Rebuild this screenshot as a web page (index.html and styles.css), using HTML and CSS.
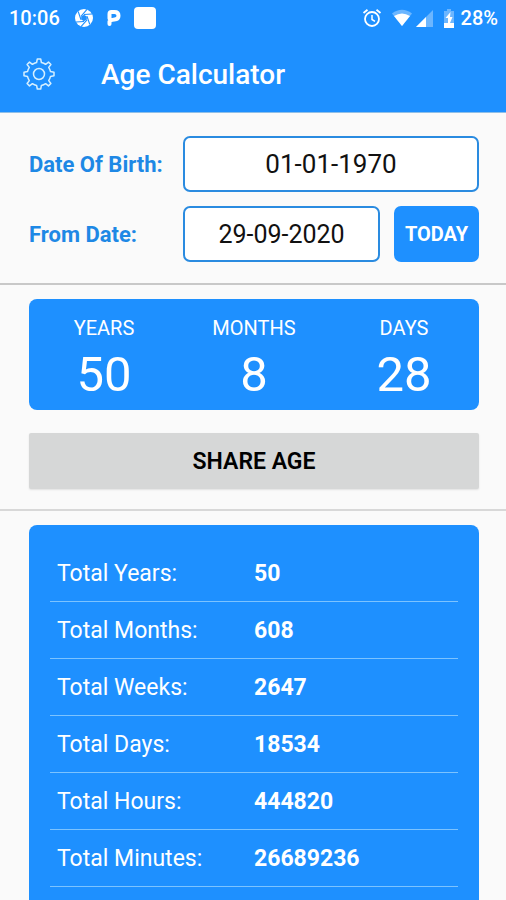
FILE: index.html
```html
<!DOCTYPE html>
<html lang="en">
<head>
  <meta charset="UTF-8" />
  <meta name="viewport" content="width=device-width, initial-scale=1.0" />
  <title>Age Calculator</title>
  <link rel="stylesheet" href="styles.css">
</head>
<body>
  <header class="header">
    <div class="status">
      <span class="time">10:06</span>
      <div class="status-left">
        <svg width="20" height="20" viewBox="0 0 20 20">
          <circle cx="10" cy="10" r="9" fill="#fff"/>
          <path d="M10 6.5 L18 6 M13 8.3 L15.8 16.5 M13 11.8 L7 18.6 M10 13.5 L2 14 M7 11.8 L4.2 3.5 M7 8.3 L13 1.4" stroke="#1e90ff" stroke-width="1.1"/>
          <path d="M10 6.8 L12.8 8.4 V11.6 L10 13.2 L7.2 11.6 V8.4 Z" fill="#1e90ff"/>
        </svg>
        <svg width="16" height="18" viewBox="0 0 16 18">
          <path d="M3.5 9.5 V5 Q3.5 3 5.5 3 H8.500 Q12.500 3 12.500 6.800 Q12.500 10.500 8.500 10.500 Q5.500 10.500 3.500 12.500 V15" fill="none" stroke="#fff" stroke-width="4" stroke-linecap="round" stroke-linejoin="round"/>
        </svg>
        <span class="app-square"></span>
      </div>
      <div class="status-right">
        <svg class="alarm" width="20" height="20" viewBox="0 0 20 20" fill="none" stroke="#fff">
          <circle cx="10" cy="11" r="7" stroke-width="1.800"/>
          <path d="M10 7 V11.500 L13 13.300" stroke-width="1.500"/>
          <path d="M1.500 5 L5.500 1.700 M18.500 5 L14.500 1.700" stroke-width="1.800"/>
        </svg>
        <svg width="20" height="18" viewBox="0 0 20 18" fill="#fff">
          <path d="M10 17 L0 4.500 Q10 -3 20 4.500 Z" opacity=".35"/>
          <path d="M10 17 L2 7 Q10 2 18 7 Z"/>
        </svg>
        <svg class="signal" width="17" height="17" viewBox="0 0 17 17" fill="#fff">
          <path d="M0 17 L17 0 V17 Z" opacity=".35"/>
          <path d="M0 17 L10 7 V17 Z"/>
        </svg>
        <svg class="battery" width="12" height="19" viewBox="0 0 12 19" fill="#fff">
          <path d="M4 0 H8 V2 H11 V14 H1 V2 H4 Z" opacity=".35"/>
          <path d="M1 14 H11 V19 H1 Z"/>
          <path d="M7.500 3 L2.500 9 H5 V14 H7 L9.500 8 H7 Z"/>
        </svg>
        <span>28%</span>
      </div>
    </div>
    <div class="toolbar">
      <button class="settings" aria-label="Settings">
        <svg width="34" height="34" viewBox="0 0 34 34" fill="none" stroke="#d5efff" stroke-width="1.500" stroke-linejoin="round">
          <path d="M14.600 5.500 L15.300 2 H18.700 L19.400 5.500 Q22 6 23.600 7.300 L26.500 5.100 L28.900 7.500 L26.700 10.400 Q28 12.300 28.500 14.600 L32 15.300 V18.700 L28.500 19.400 Q28 21.700 26.700 23.600 L28.900 26.500 L26.500 28.900 L23.600 26.700 Q21.700 28 19.400 28.500 L18.700 32 H15.300 L14.600 28.500 Q12.300 28 10.400 26.700 L7.500 28.900 L5.100 26.500 L7.300 23.600 Q6 21.700 5.500 19.400 L2 18.700 V15.300 L5.500 14.600 Q6 12.300 7.300 10.400 L5.100 7.500 L7.500 5.100 L10.400 7.300 Q12.300 6 14.600 5.500 Z"/>
          <circle cx="17" cy="17" r="5.500"/>
        </svg>
      </button>
      <h1>Age Calculator</h1>
    </div>
  </header>

  <form class="dates">
    <label for="dob">Date Of Birth:</label>
    <input class="dob" id="dob" type="text" value="01-01-1970">
    <label for="from">From Date:</label>
    <div class="from-row">
      <input id="from" type="text" value="29-09-2020">
      <button class="today" type="button">TODAY</button>
    </div>
  </form>

  <section class="result">
    <div class="age">
      <div class="unit"><span>YEARS</span><strong>50</strong></div>
      <div class="unit"><span>MONTHS</span><strong>8</strong></div>
      <div class="unit"><span>DAYS</span><strong>28</strong></div>
    </div>
    <button class="share" type="button">SHARE AGE</button>
  </section>

  <section class="totals">
    <table>
      <tr><th scope="row">Total Years:</th><td>50</td></tr>
      <tr><th scope="row">Total Months:</th><td>608</td></tr>
      <tr><th scope="row">Total Weeks:</th><td>2647</td></tr>
      <tr><th scope="row">Total Days:</th><td>18534</td></tr>
      <tr><th scope="row">Total Hours:</th><td>444820</td></tr>
      <tr><th scope="row">Total Minutes:</th><td>26689236</td></tr>
    </table>
  </section>
</body>
</html>
```
FILE: styles.css
```css
* {
  box-sizing: border-box;
}
body {
  margin: 0;
  min-height: 100vh;
  display: flex;
  flex-direction: column;
  background: #fafafa;
  font-family: Roboto, sans-serif;
}
button, input {
  font-family: inherit;
}
.header {
  background: #1e90ff;
  color: #fff;
  border-bottom: 1px solid #8fbfe8;
}
.status {
  display: flex;
  align-items: center;
  height: 36px;
  padding: 0 8px 0 9px;
  font-size: 20px;
  font-weight: 500;
}
.status-left {
  display: flex;
  align-items: center;
  gap: 12px;
  margin-left: 14px;
}
.app-square {
  width: 22px;
  height: 22px;
  border-radius: 4px;
  background: #fff;
}
.status-right {
  display: flex;
  align-items: center;
  margin-left: auto;
}
.alarm {
  margin-right: 10px;
}
.signal {
  margin: 0 10px 0 4px;
}
.battery {
  margin-right: 6px;
}
.toolbar {
  display: flex;
  align-items: center;
  gap: 45px;
  height: 76px;
  padding: 0 22px;
}
.settings {
  display: flex;
  padding: 0;
  border: none;
  background: none;
  cursor: pointer;
}
.toolbar h1 {
  margin: 0;
  font-size: 28px;
  font-weight: 500;
}
.dates {
  display: grid;
  grid-template-columns: 154px 1fr;
  row-gap: 14px;
  align-items: center;
  padding: 23px 27px 21px 29px;
  border-bottom: 2px solid #c8c8c8;
}
.dates label {
  color: #1e88e5;
  font-size: 22px;
  font-weight: 700;
}
.dates input {
  width: 100%;
  min-width: 0;
  height: 56px;
  border: 2px solid #2a8be0;
  border-radius: 7px;
  background: #fff;
  color: #111;
  font-size: 25px;
  text-align: center;
}
.dates .dob {
  font-size: 26px;
}
.from-row {
  display: flex;
  gap: 14px;
}
.today {
  flex: none;
  width: 85px;
  padding: 0;
  border: none;
  border-radius: 7px;
  background: #1e90ff;
  color: #fff;
  font-size: 20px;
  font-weight: 700;
}
.result {
  padding: 14px 27px 20px 29px;
  border-bottom: 2px solid #d8d8d8;
}
.age {
  display: grid;
  grid-template-columns: repeat(3, 1fr);
  padding: 16px 0 1px;
  border-radius: 8px;
  background: #1e90ff;
  color: #fff;
  text-align: center;
}
.unit span {
  display: block;
  font-size: 20px;
  line-height: 26px;
}
.unit strong {
  display: block;
  font-size: 49px;
  line-height: 68px;
  font-weight: 400;
}
.share {
  display: block;
  width: 100%;
  height: 56px;
  margin-top: 23px;
  border: none;
  border-radius: 2px;
  background: #d6d7d7;
  box-shadow: 0 1px 2px rgba(0,0,0,0.1);
  color: #000;
  font-size: 23px;
  font-weight: 600;
}
.totals {
  flex: 1;
  margin: 14px 27px 0 29px;
  padding: 20px 21px 14px;
  border-radius: 8px 8px 0 0;
  background: #1e90ff;
  color: #fff;
}
.totals table {
  width: 100%;
  border-collapse: separate;
  border-spacing: 0;
  font-size: 23px;
}
.totals th, .totals td {
  height: 57px;
  padding: 0;
  border-bottom: 1px solid #7cc3ff;
  text-align: left;
}
.totals th {
  width: 50%;
  padding-left: 7px;
  font-weight: 400;
}
.totals td {
  font-weight: 700;
}
```
